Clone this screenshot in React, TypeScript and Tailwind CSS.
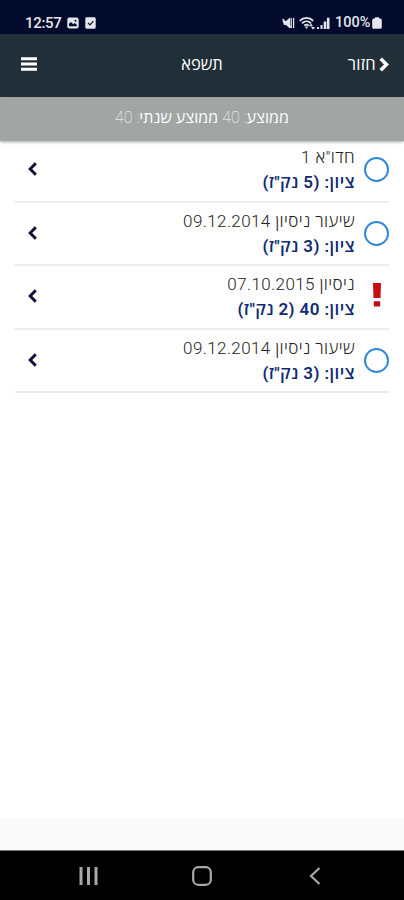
type Lesson = {
  title: string;
  grade: string;
  failed?: boolean;
};

const lessons: Lesson[] = [
  { title: "חדו\"א 1", grade: "ציון: (5 נק\"ז)" },
  { title: "שיעור ניסיון 09.12.2014", grade: "ציון: (3 נק\"ז)" },
  { title: "ניסיון 07.10.2015", grade: "ציון: 40 (2 נק\"ז)", failed: true },
  { title: "שיעור ניסיון 09.12.2014", grade: "ציון: (3 נק\"ז)" },
];

function StatusBar() {
  return (
    <div dir="ltr" className="flex h-[34px] items-end justify-between bg-[#020b2b] pr-[22px] pb-px pl-[25px] text-[#e4e6ec]">
      <div className="flex items-center">
        <span className="w-[37px] text-[15px] leading-5 font-medium tracking-[-0.3px]">12:57</span>
        {/* picture */}
        <svg className="ml-[5px] h-3 w-3" viewBox="0 0 12 12">
          <rect x="0.3" y="0.5" width="11.4" height="11" rx="2.2" fill="currentColor" />
          <path d="M2 9.2V6.8L4 5l2.2 2.3L7.8 6 10 8v1.2z" fill="#020b2b" />
          <circle cx="8.5" cy="3.7" r="1" fill="#020b2b" />
        </svg>
        {/* checked note */}
        <svg className="ml-[6px] h-3 w-[11px]" viewBox="0 0 11 12">
          <rect x="0.3" y="0.3" width="10.4" height="11.4" rx="1.4" fill="currentColor" />
          <path d="M3 5.8l2 2 3.4-3.6" fill="none" stroke="#020b2b" strokeWidth="1.2" />
        </svg>
      </div>
      <div className="flex items-center">
        {/* muted */}
        <svg className="h-3 w-[13px]" viewBox="0 0 13 12">
          <path d="M0.5 4H4l4-3.5v11L4 8H2z" fill="currentColor" />
          <path d="M0.5 2L9 10.5M9.2 1v10M11.6 1v10" fill="none" stroke="currentColor" strokeWidth="1.3" />
        </svg>
        {/* wifi */}
        <svg className="ml-[4px] h-3.5 w-[17px]" viewBox="0 0 17 14">
          <path d="M0.8 4.8c3.8-3.8 9.6-3.8 13.4 0M3 7.3c2.6-2.6 6.4-2.6 9 0M5.2 9.7c1.4-1.3 3.2-1.3 4.6 0" fill="none" stroke="currentColor" strokeWidth="1.8" />
          <path d="M7.5 13L5.8 10.6h3.4zM12 7.5L14 10.3h-4zM14 13.8l-2-2.8h4z" fill="currentColor" />
        </svg>
        {/* signal */}
        <svg className="ml-px h-3 w-[13px]" viewBox="0 0 13 12">
          <path d="M1 10v2M4.5 8v4" fill="none" stroke="currentColor" strokeWidth="2" />
          <path d="M8 4.5V12M11.2 0.8V12" fill="none" stroke="currentColor" strokeWidth="2.6" />
        </svg>
        <span className="ml-[5px] w-[36px] text-[14.5px] leading-5 font-medium whitespace-nowrap">100%</span>
        {/* battery */}
        <svg className="ml-px h-3 w-[10px]" viewBox="0 0 10 12">
          <path d="M3 1.5V0.2h4v1.3h1.2q1.6 0 1.6 1.6v7.1q0 1.6-1.6 1.6H1.8Q0.2 11.8 0.2 10.2V3.1q0-1.6 1.6-1.6z" fill="currentColor" />
        </svg>
      </div>
    </div>
  );
}

function Header() {
  return (
    <header className="grid h-[63px] shrink-0 grid-cols-3 items-center bg-[#202f38] px-[15px] pb-[3px] text-white">
      <button className="flex items-center gap-[3px] text-[16.5px] font-medium">
        <svg className="h-[15px] w-[10px]" viewBox="0 0 10 15">
          <path d="M1.7 1.7L7.5 7.5l-5.8 5.8" fill="none" stroke="currentColor" strokeWidth="3.5" />
        </svg>
        <span className="pt-[3px] tracking-[0.3px]">חזור</span>
      </button>
      <h1 className="pt-[3px] text-center text-[16.5px] font-medium">תשפא</h1>
      <button className="flex justify-end pl-[6px]">
        <svg className="h-[14px] w-4" viewBox="0 0 16 14">
          <path d="M0 1.7h16M0 7h16M0 12.3h16" stroke="currentColor" strokeWidth="2.9" />
        </svg>
      </button>
    </header>
  );
}

function LessonRow({ title, grade, failed }: Lesson) {
  return (
    <li className="flex h-[63.5px] items-center border-b-2 border-[#ececec]">
      <div className="flex w-[25px] shrink-0 justify-center">
        {failed ? (
          <svg className="mb-[3px] h-6 w-2" viewBox="0 0 8 24">
            <path d="M0 0h8L7.5 15H0.5zM0.8 18.2h6.4V23.5H0.8z" fill="#c70d14" />
          </svg>
        ) : (
          <span className="size-[25px] rounded-full border-2 border-[#3288d8]" />
        )}
      </div>
      <div className="mr-[9px] grow">
        <p className="pt-px text-[17px] leading-[25px] font-light tracking-[0.4px] text-[#222]">{title}</p>
        <p className="text-[17px] leading-[25px] font-semibold tracking-[0.4px] text-[#102a72]">{grade}</p>
      </div>
      <svg className="mb-px ml-[13px] h-[14px] w-[9px]" viewBox="0 0 9 14">
        <path d="M7.8 1.3L2.2 7l5.6 5.7" fill="none" stroke="#10123a" strokeWidth="3" />
      </svg>
    </li>
  );
}

export default function App() {
  return (
    <div
      dir="rtl"
      className="flex h-[900px] w-full flex-col overflow-hidden bg-white font-[Roboto,'Open_Sans',sans-serif]"
    >
      <StatusBar />
      <Header />
      <div className="h-[44px] shrink-0 bg-[#a1a5a4] pt-[9px] text-center text-[16px] leading-6 tracking-[0.05px] text-white shadow-[0_1px_3px_rgba(0,0,0,0.35)]">
        ממוצע<span className="font-thin">: 40 </span>ממוצע שנתי<span className="font-thin">: 40</span>
      </div>
      <ul className="-mt-[2px] grow px-[15px]">
        {lessons.map((lesson, i) => (
          <LessonRow key={i} {...lesson} />
        ))}
      </ul>
      <div className="h-8 shrink-0 bg-[#fafafa]" />
      <nav dir="ltr" className="flex h-[50px] shrink-0 items-center border-t border-[#777] bg-black pl-[79px] text-[#a9a9a9]">
        <svg className="h-[18px] w-[19px]" viewBox="0 0 19 18">
          <path d="M2 0v18M9.5 0v18M17 0v18" stroke="currentColor" strokeWidth="3" />
        </svg>
        <svg className="ml-[94px] h-5 w-5" viewBox="0 0 20 20">
          <rect x="1.2" y="1.2" width="17.6" height="17.6" rx="5" fill="none" stroke="currentColor" strokeWidth="2.2" />
        </svg>
        <svg className="ml-[97px] h-[18px] w-[12px]" viewBox="0 0 12 18">
          <path d="M10.5 1L2 9l8.5 8" fill="none" stroke="currentColor" strokeWidth="2.2" />
        </svg>
      </nav>
    </div>
  );
}
